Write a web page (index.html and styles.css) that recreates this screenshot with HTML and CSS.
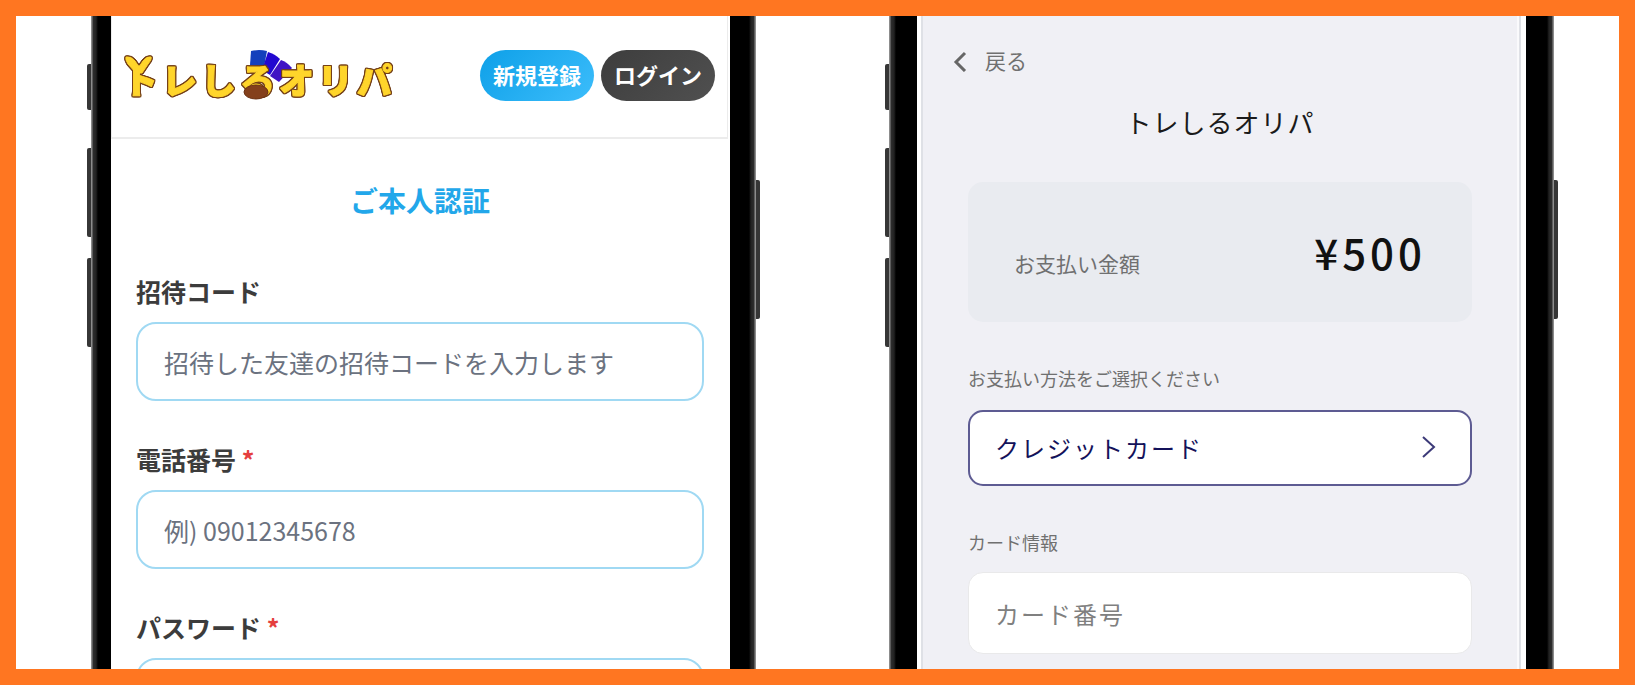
FILE: index.html
```html
<!DOCTYPE html>
<html lang="ja">
<head>
    <meta charset="UTF-8">
    <title>トレしるオリパ</title>
    <link rel="stylesheet" href="styles.css">
</head>
<body>
<main class="stage">
    <section class="phone phone-signup">
        <i class="key key-mute"></i>
        <i class="key key-up"></i>
        <i class="key key-down"></i>
        <i class="key key-power"></i>
        <div class="screen">
            <header class="header">
                <svg class="logo" width="280" height="60" viewBox="0 0 280 60" role="img" aria-label="トレしるオリパ">
                    <!-- カード -->
                    <path d="M129 6 Q137 4 145 6 L142 22 L128 20 Z" fill="#1440bc"/>
                    <path d="M146 7 Q153 9 158 14 L148 30 L140 25 Z" fill="#2208d0"/>
                    <path d="M159 15 Q165 17 170 23 L157 37 L148 31 Z" fill="#4013c4"/>
                    <g class="logo-letters">
                        <!-- 耳 -->
                        <path d="M14 28 L6 19 Q3 14 4 12 Q9 11 13 16 L17 22 L21 16 Q25 11 29 12 Q30 14 26 19 L20 28 Z"/>
                        <text x="1" y="49">トレしるオリパ</text>
                    </g>
                    <ellipse cx="134" cy="47" rx="12" ry="7" fill="#84401c" stroke="#6b3214" stroke-width="1"/>
                </svg>
                <nav class="nav">
                    <button type="button" class="pill pill-blue">新規登録</button>
                    <button type="button" class="pill pill-dark">ログイン</button>
                </nav>
            </header>
            <form class="signup" action="">
                <h1>ご本人認証</h1>
                <div class="field">
                    <label for="invite">招待コード</label>
                    <input id="invite" type="text" placeholder="招待した友達の招待コードを入力します">
                </div>
                <div class="field">
                    <label for="phone">電話番号 <span class="required">*</span></label>
                    <input id="phone" type="tel" placeholder="例) 09012345678">
                </div>
                <div class="field">
                    <label for="password">パスワード <span class="required">*</span></label>
                    <input id="password" type="password">
                </div>
            </form>
        </div>
    </section>

    <section class="phone phone-payment">
        <i class="key key-mute"></i>
        <i class="key key-up"></i>
        <i class="key key-down"></i>
        <i class="key key-power"></i>
        <div class="screen">
            <div class="payment">
                <a class="back" href="#">
                    <svg width="14" height="24" viewBox="0 0 14 24" fill="none" stroke="#666666" stroke-width="3">
                        <path d="M12 5 L3 14 L12 23"/>
                    </svg>
                    戻る
                </a>
                <form class="checkout" action="">
                    <h2>トレしるオリパ</h2>
                    <div class="amount">
                        <span class="amount-label">お支払い金額</span>
                        <strong class="amount-value">¥500</strong>
                    </div>
                    <p class="caption">お支払い方法をご選択ください</p>
                    <button type="button" class="method">
                        クレジットカード
                        <svg width="16" height="24" viewBox="0 0 16 24" fill="none" stroke="#3c3a78" stroke-width="2">
                            <path d="M2 2 L13 12 L2 22"/>
                        </svg>
                    </button>
                    <label class="caption" for="card">カード情報</label>
                    <input id="card" class="card" type="text" placeholder="カード番号">
                </form>
            </div>
        </div>
    </section>
</main>
</body>
</html>
```

FILE: styles.css
```css
*{
    margin: 0;
    padding: 0;
    box-sizing: border-box;
}
body{
    font-family: "Noto Sans CJK JP", sans-serif;
    background: #ffffff;
}
button, input{
    font-family: inherit;
    outline: none;
}
.stage{
    display: grid;
    grid-template-columns: 1fr 1fr;
    grid-template-rows: 100%;
    column-gap: 133px;
    height: 100vh;
    padding: 0 65px 0 75px;
    border: 16px solid #ff7621;
    overflow: hidden;
}

/* 端末 */
.phone{
    position: relative;
    min-width: 0;
    background: linear-gradient(to right, #8c8c8c 0, #8c8c8c 1px, #2e2e2e 2px, #222222 5px, #000000 7px, #000000 calc(100% - 7px), #222222 calc(100% - 5px), #2e2e2e calc(100% - 2px), #8c8c8c calc(100% - 1px));
}
.phone-signup{
    padding: 0 26px 0 20px;
}
.phone-payment{
    padding: 0 28px;
}
.key{
    position: absolute;
    left: -4px;
    width: 4px;
    background: #363636;
    border-radius: 2px 0 0 2px;
}
.key-mute{
    top: 48px;
    height: 46px;
}
.key-up{
    top: 132px;
    height: 89px;
}
.key-down{
    top: 242px;
    height: 89px;
}
.key-power{
    top: 164px;
    left: auto;
    right: -4px;
    height: 139px;
    border-radius: 0 2px 2px 0;
}
.screen{
    height: 100%;
    background: #ffffff;
    overflow: hidden;
}

/* 会員登録 */
.header{
    display: flex;
    justify-content: space-between;
    align-items: center;
    height: 123px;
    margin-right: 2px;
    padding: 0 12px 3px 10px;
    border: 1px solid #ececec;
    border-top: none;
    border-bottom-width: 2px;
}
.logo-letters{
    font-size: 35px;
    font-weight: 900;
    letter-spacing: 4px;
    fill: #ffd52b;
    stroke: #ffd52b;
    stroke-width: 1px;
    stroke-linejoin: round;
    filter: drop-shadow(1px 0 #744019) drop-shadow(-1px 0 #744019) drop-shadow(0 1px #744019) drop-shadow(0 -1px #744019);
}
.nav{
    display: flex;
    gap: 7px;
}
.pill{
    width: 114px;
    height: 51px;
    border: none;
    border-radius: 26px;
    color: #ffffff;
    font-size: 22px;
    font-weight: bold;
    line-height: 48px;
    padding-bottom: 3px;
}
.pill-blue{
    background: linear-gradient(135deg, #0ea0e8, #3cbdfb);
}
.pill-dark{
    background: linear-gradient(135deg, #3d3d3d, #505050);
}
.signup{
    padding: 40px 26px 0 25px;
}
.signup h1{
    margin-bottom: 53px;
    color: #22a7ea;
    font-size: 28px;
    font-weight: bold;
    line-height: 42px;
    text-align: center;
}
.field{
    margin-bottom: 41px;
}
.field label{
    display: block;
    margin-bottom: 14px;
    color: #3c3c3c;
    font-size: 25px;
    font-weight: bold;
    line-height: 34px;
}
.required{
    color: #e53e3e;
}
.field input{
    display: block;
    width: 100%;
    height: 79px;
    padding: 0 26px;
    border: 2px solid #a0d9f3;
    border-radius: 20px;
    color: #333333;
    font-size: 25px;
}
.field input::placeholder{
    color: #6b7280;
}

/* お支払い */
.payment{
    height: 100%;
    margin: 0 5px 0 4px;
    padding: 28px 47px 0 30px;
    background: #f0f0f5;
    border-left: 2px solid #dfe1e6;
    border-right: 2px solid #dfe1e6;
    box-shadow: inset -2px 0 #fafafc;
}
.back{
    display: flex;
    align-items: center;
    gap: 18px;
    color: #707070;
    font-size: 21px;
    line-height: 32px;
    text-decoration: none;
}
.checkout{
    padding-left: 15px;
}
.checkout h2{
    margin: 26px 0 40px;
    color: #1a1a1a;
    font-size: 26px;
    font-weight: normal;
    letter-spacing: 1px;
    line-height: 40px;
    text-align: center;
}
.amount{
    display: flex;
    justify-content: space-between;
    align-items: center;
    height: 140px;
    margin-bottom: 40px;
    padding: 0 46px;
    background: #e9ebf0;
    border-radius: 15px;
}
.amount-label{
    padding-top: 22px;
    color: #707070;
    font-size: 21px;
}
.amount-value{
    color: #111111;
    font-size: 42px;
    font-weight: 500;
    letter-spacing: 4px;
    line-height: 64px;
}
.caption{
    display: block;
    color: #707070;
    font-size: 18px;
    line-height: 32px;
}
.method{
    display: flex;
    justify-content: space-between;
    align-items: center;
    width: 100%;
    height: 76px;
    margin: 16px 0 40px;
    padding: 0 33px 2px 25px;
    background: #ffffff;
    border: 2px solid #5d5b92;
    border-radius: 15px;
    color: #14125a;
    font-size: 24px;
    letter-spacing: 2px;
}
.card{
    display: block;
    width: 100%;
    height: 82px;
    margin-top: 14px;
    padding: 0 26px;
    background: #ffffff;
    border: 1px solid #e9e9ea;
    border-radius: 15px;
    color: #333333;
    font-size: 24px;
    letter-spacing: 2px;
}
.card::placeholder{
    color: #808080;
}
```
